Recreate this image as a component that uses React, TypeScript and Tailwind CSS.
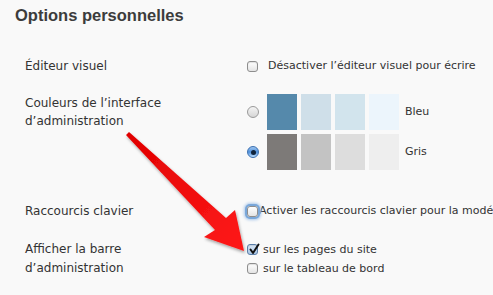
import React from 'react'

const font = { fontFamily: '"DejaVu Sans", "Liberation Sans", sans-serif' }

const Checkbox = ({ checked = false, focus = false }: { checked?: boolean; focus?: boolean }) => (
  <span
    className={`relative inline-flex w-[11px] h-[11px] shrink-0 rounded-[3px] border bg-gradient-to-b ${
      focus ? 'shadow-[0_0_0_2px_#7aa7d9,0_0_3px_3px_#a9c7ea]' : 'shadow-[inset_0_1px_1px_rgba(0,0,0,0.12)]'
    } ${checked ? 'from-[#dbe9f7] to-[#a9c6e6] border-[#5a7ea8]' : 'from-[#ffffff] to-[#e4e4e4] border-[#8e8e8e]'}`}
  >
    {checked && (
      <svg viewBox="0 0 12 12" className="absolute -top-[2px] left-0 w-[12px] h-[12px]">
        <path d="M2.5 6.5 L5 10 L10.5 1.5" fill="none" stroke="#111" strokeWidth="2" strokeLinecap="round" strokeLinejoin="round" />
      </svg>
    )}
  </span>
)

const Radio = ({ checked = false }: { checked?: boolean }) => (
  <span
    className={`inline-flex items-center justify-center w-[12px] h-[12px] shrink-0 rounded-full border ${
      checked
        ? 'border-[#3a6fb0] bg-gradient-to-b from-[#9ec6f0] via-[#4d8fdb] to-[#bfe0ff]'
        : 'border-[#9a9a9a] bg-gradient-to-b from-[#f4f4f4] to-[#d6d6d6]'
    }`}
  >
    {checked && <span className="w-[5px] h-[5px] rounded-full bg-[#10243d]" />}
  </span>
)

const Swatches = ({ colors }: { colors: string[] }) => (
  <div className="flex gap-[4px]">
    {colors.map((c, i) => (
      <div key={i} className="w-[30px] h-[36px]" style={{ backgroundColor: c }} />
    ))}
  </div>
)

export default function App() {
  return (
    <div className="relative w-[493px] h-[295px] overflow-hidden bg-[#f9f9f9] text-[#333] text-[12px]" style={font}>
      <h2
        className="pl-[15px] pt-[3px] text-[16.5px] font-bold text-[#3c3c3c] leading-[24px]"
        style={{ fontFamily: '"Liberation Sans", Arial, sans-serif' }}
      >
        Options personnelles
      </h2>

      {/* Éditeur visuel */}
      <div className="flex mt-[30px] leading-[18px]">
        <div className="w-[247px] shrink-0 pl-[25px]">Éditeur visuel</div>
        <label className="flex items-center gap-[10px] whitespace-nowrap text-[11px]">
          <Checkbox />
          Désactiver l’éditeur visuel pour écrire
        </label>
      </div>

      {/* Couleurs */}
      <div className="flex mt-[19px] leading-[18px]">
        <div className="w-[247px] shrink-0 pl-[25px]">
          Couleurs de l’interface
          <br />
          d’administration
        </div>
        <div className="flex flex-col gap-[4px]">
          <div className="flex items-center">
            <Radio />
            <div className="ml-[8px]">
              <Swatches colors={['#5589ab', '#cfdfe9', '#d2e4ed', '#ecf5fc']} />
            </div>
            <span className="ml-[6px] text-[11px]">Bleu</span>
          </div>
          <div className="flex items-center">
            <Radio checked />
            <div className="ml-[8px]">
              <Swatches colors={['#7d7a78', '#c3c3c3', '#dddddd', '#eeeeee']} />
            </div>
            <span className="ml-[6px] text-[11px]">Gris</span>
          </div>
        </div>
      </div>

      {/* Raccourcis clavier */}
      <div className="flex mt-[32px] leading-[18px]">
        <div className="w-[247px] shrink-0 pl-[25px]">Raccourcis clavier</div>
        <label className="flex items-center gap-[1px] whitespace-nowrap text-[11px]">
          <Checkbox focus />
          Activer les raccourcis clavier pour la modération des commentaires
        </label>
      </div>

      {/* Barre d'administration */}
      <div className="flex mt-[20px] leading-[19px]">
        <div className="w-[247px] shrink-0 pl-[25px]">
          Afficher la barre
          <br />
          d’administration
        </div>
        <div className="flex flex-col text-[11px]">
          <label className="flex items-center gap-[5px] whitespace-nowrap">
            <Checkbox checked />
            sur les pages du site
          </label>
          <label className="flex items-center gap-[5px] whitespace-nowrap">
            <Checkbox />
            sur le tableau de bord
          </label>
        </div>
      </div>

      {/* annotation arrow */}
      <svg className="absolute left-0 top-0 pointer-events-none" width="493" height="295" viewBox="0 0 493 295">
        <defs>
          <filter id="sh" x="-20%" y="-20%" width="140%" height="140%">
            <feDropShadow dx="1" dy="2" stdDeviation="1.5" floodColor="#000" floodOpacity="0.35" />
          </filter>
          <linearGradient id="rg" x1="0" y1="0" x2="1" y2="1">
            <stop offset="0" stopColor="#e00000" />
            <stop offset="1" stopColor="#ff1a1a" />
          </linearGradient>
        </defs>
        <path
          d="M126 135 L129 132 L226 218 L235 210 L244 251 L204 237 L215 230 Z"
          fill="url(#rg)"
          filter="url(#sh)"
        />
      </svg>
    </div>
  )
}
